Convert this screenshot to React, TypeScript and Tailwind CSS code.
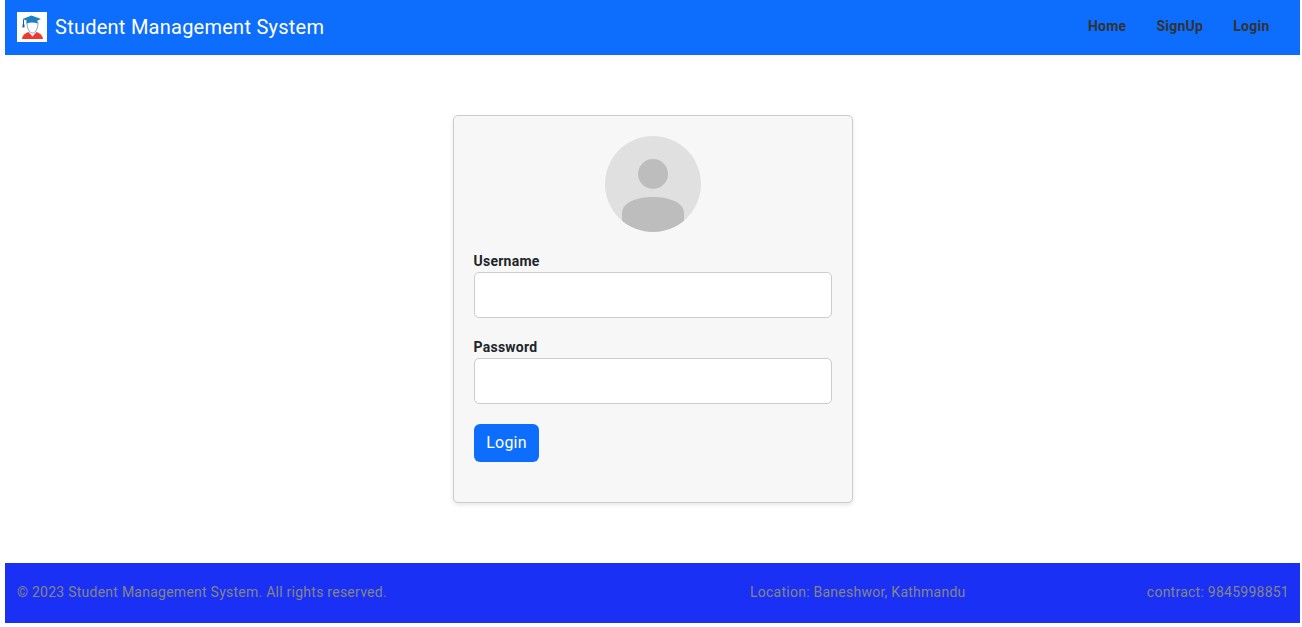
export default function App() {
  return (
    <div className="ml-[5px] mr-[2px] font-['Roboto',sans-serif] tracking-[0.25px] text-[#212529]">
      <nav className="flex h-[55px] items-center bg-[#0d6efd] pb-px pl-3 pr-[15.5px]">
        <div className="flex h-[30px] w-[30px] items-center justify-center bg-white">
          <svg width="30" height="30" viewBox="0 0 30 30" aria-hidden="true">
            <path d="M5 27 C5.5 23 8 21.5 11.5 20 L15.5 24.5 L19.5 20 C23 21.5 25.5 23 26 27 Z" fill="#f0392b" />
            <path d="M10 10 C10 16 12 21 15.5 21 C19 21 21 16 21 10" fill="#fff" stroke="#7fa6c9" strokeWidth="1" />
            <path d="M14.5 3.5 L24 7 L20.5 8.5 L20.5 11.5 C17 10 13 10 9.5 11.5 L9.5 8.5 L5.5 7 Z" fill="#1f7fc4" />
            <path d="M6.5 7.5 L6.5 13" stroke="#1f5f8f" strokeWidth="1" fill="none" />
            <rect x="5.5" y="12.5" width="2" height="3" fill="#1f5f8f" />
          </svg>
        </div>
        <a className="ml-2 text-[20px] leading-[30px] text-white">Student Management System</a>
        <ul className="ml-auto flex pb-[2px] text-[14px] font-bold leading-[21px] text-[#333333]">
          <li className="mx-[7px] px-2">Home</li>
          <li className="mx-[7px] px-2">SignUp</li>
          <li className="mx-[7px] px-2">Login</li>
        </ul>
      </nav>

      <main className="flex justify-center py-[60px]">
        <form className="h-[388px] w-[400px] rounded-[5px] border border-[#cccccc] bg-[#f7f7f7] px-5 pt-5 shadow-[0_2px_4px_rgba(0,0,0,0.1)]">
          <div className="flex justify-center">
            <svg width="96" height="96" viewBox="0 0 96 96" aria-hidden="true">
              <defs>
                <clipPath id="avatar-clip">
                  <circle cx="48" cy="48" r="48" />
                </clipPath>
              </defs>
              <circle cx="48" cy="48" r="48" fill="#e0e0e0" />
              <circle cx="48" cy="38" r="15" fill="#bdbdbd" />
              <path d="M17 77 C17 67 31 61 48 61 C65 61 79 67 79 77 L79 96 L17 96 Z" fill="#bdbdbd" clipPath="url(#avatar-clip)" />
            </svg>
          </div>
          <label className="mt-5 block pb-[2px] text-[14px] font-bold leading-[18px]">Username</label>
          <input type="text" className="block h-[46px] w-full rounded-[5px] border border-[#cccccc] bg-white" />
          <label className="mt-5 block pb-[2px] text-[14px] font-bold leading-[18px]">Password</label>
          <input type="password" className="block h-[46px] w-full rounded-[5px] border border-[#cccccc] bg-white" />
          <button type="button" className="mt-5 h-[38px] w-[65px] rounded-[6px] bg-[#0d6efd] pl-px text-[16px] text-white">Login</button>
        </form>
      </main>

      <footer className="flex h-[60px] items-center bg-[#1a31f5] pb-[2px] pl-3 pr-[11px] text-[14px] text-[#858585]">
        <p className="w-[733px]">© 2023 Student Management System. All rights reserved.</p>
        <p>Location: Baneshwor, Kathmandu</p>
        <p className="ml-auto">contract: 9845998851</p>
      </footer>
    </div>
  );
}
